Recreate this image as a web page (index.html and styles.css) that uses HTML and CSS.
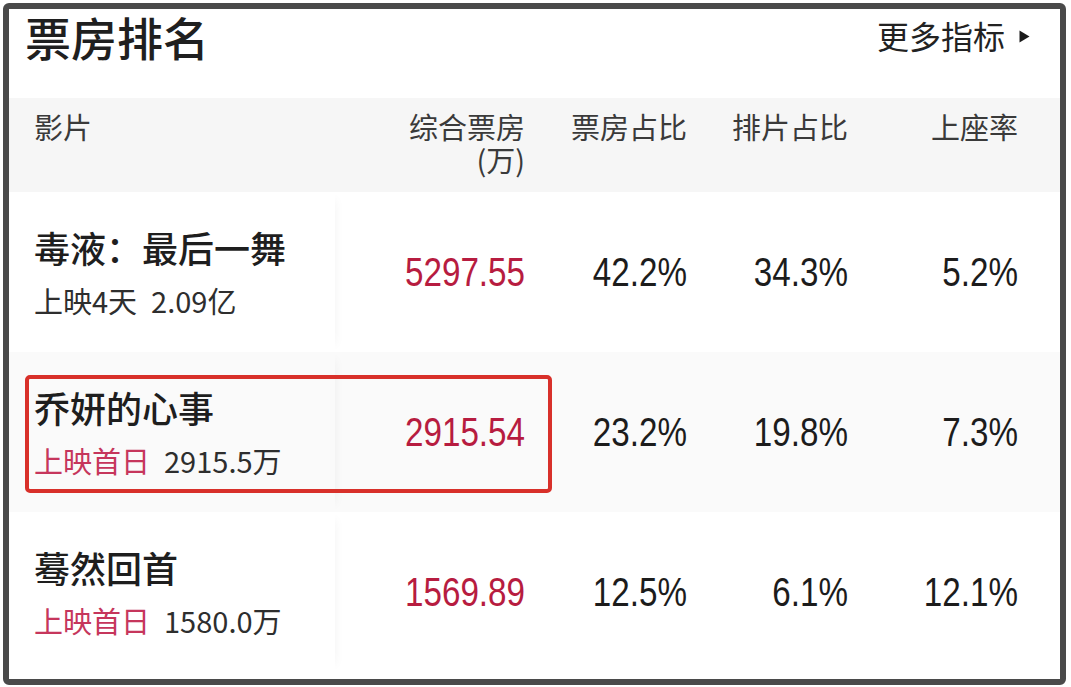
FILE: index.html
```html
<!DOCTYPE html>
<html lang="zh-CN">
<head>
<meta charset="utf-8">
<title>票房排名</title>
<link rel="stylesheet" href="styles.css">
</head>
<body>
<div class="frame">
  <div class="card">
    <div class="topbar">
      <h1 class="title">票房排名</h1>
      <div class="more">
        <span>更多指标</span>
        <svg class="tri" width="11" height="13" viewBox="0 0 11 13"><path d="M0.5 0.5 L10.5 6.5 L0.5 12.5 Z" fill="#1a1a1a"/></svg>
      </div>
    </div>

    <div class="row head">
      <div class="cell first">影片</div>
      <div class="cell num"><div class="hl">综合票房</div><div class="hl">(万)</div></div>
      <div class="cell num"><div class="hl">票房占比</div></div>
      <div class="cell num"><div class="hl">排片占比</div></div>
      <div class="cell num"><div class="hl">上座率</div></div>
    </div>

    <div class="row">
      <div class="cell first">
        <div class="name">毒液：最后一舞</div>
        <div class="sub"><span>上映4天</span><span class="amt">2.09亿</span></div>
      </div>
      <div class="cell num val red">5297.55</div>
      <div class="cell num val">42.2%</div>
      <div class="cell num val">34.3%</div>
      <div class="cell num val">5.2%</div>
    </div>

    <div class="row alt">
      <div class="cell first">
        <div class="name">乔妍的心事</div>
        <div class="sub"><span class="pink">上映首日</span><span class="amt">2915.5万</span></div>
      </div>
      <div class="cell num val red">2915.54</div>
      <div class="cell num val">23.2%</div>
      <div class="cell num val">19.8%</div>
      <div class="cell num val">7.3%</div>
      <div class="highlight"></div>
    </div>

    <div class="row">
      <div class="cell first">
        <div class="name">蓦然回首</div>
        <div class="sub"><span class="pink">上映首日</span><span class="amt">1580.0万</span></div>
      </div>
      <div class="cell num val red">1569.89</div>
      <div class="cell num val">12.5%</div>
      <div class="cell num val">6.1%</div>
      <div class="cell num val">12.1%</div>
    </div>
  </div>
</div>
</body>
</html>
```

FILE: styles.css
```css
html, body {
  margin: 0;
  padding: 0;
  background: #ffffff;
}

body {
  font-family: "Noto Sans CJK SC", "Noto Sans", sans-serif;
  color: #222;
}

.frame {
  box-sizing: border-box;
  margin: 3px 0 0 3px;
  width: 1063px;
  height: 682px;
  border: 6px solid #4a4a4a;
  border-radius: 6px;
  background: #fff;
}

.card {
  width: 1051px;
  height: 670px;
}

.topbar {
  height: 89px;
  display: flex;
  align-items: flex-start;
  justify-content: space-between;
  padding: 0 30px 0 16px;
  box-sizing: border-box;
}

.title {
  margin: 0;
  font-size: 46px;
  font-weight: 500;
  line-height: 54px;
  color: #1f1f1f;
}

.more {
  margin-top: 6px;
  display: flex;
  align-items: center;
  gap: 14px;
  font-size: 32px;
  line-height: 40px;
  color: #222;
}

.tri {
  display: block;
  margin-top: 2px;
}

.row {
  position: relative;
  display: grid;
  grid-template-columns: 326px 190px 162px 161px 170px;
  padding-right: 42px;
  height: 160px;
  align-items: center;
  background: #fff;
}

.row.alt {
  background: #fafafa;
}

.row.head {
  height: 94px;
  align-items: start;
  background: #f6f6f6;
  font-size: 29px;
  line-height: 33px;
  color: #3a3a3a;
  padding-top: 12px;
  box-sizing: border-box;
}

.hl {
  height: 33px;
}

.cell.first {
  padding-left: 25px;
  align-self: stretch;
  display: flex;
  flex-direction: column;
  justify-content: center;
  box-shadow: 8px 0 10px -8px rgba(0, 0, 0, 0.05);
}

.row.head .cell.first {
  display: block;
  box-shadow: none;
}

.num {
  text-align: right;
}

.name {
  font-size: 36px;
  line-height: 44px;
  color: #1e1e1e;
  font-weight: 500;
  white-space: nowrap;
}

.sub {
  margin-top: 11px;
  font-size: 29px;
  line-height: 40px;
  color: #2e2e2e;
  display: flex;
  gap: 14px;
  white-space: nowrap;
}

.amt {
  font-size: 29px;
}

.pink {
  color: #c6365c;
}

.val {
  font-family: "Liberation Sans", "Noto Sans", sans-serif;
  font-size: 40px;
  color: #1c1c1c;
  line-height: 1;
  transform: scaleX(0.83);
  transform-origin: right center;
}

.val.red {
  color: #b71c40;
}

.highlight {
  position: absolute;
  left: 16px;
  top: 23px;
  width: 527px;
  height: 118px;
  box-sizing: border-box;
  border: 4px solid #d8302a;
  border-radius: 5px;
  pointer-events: none;
}
```
